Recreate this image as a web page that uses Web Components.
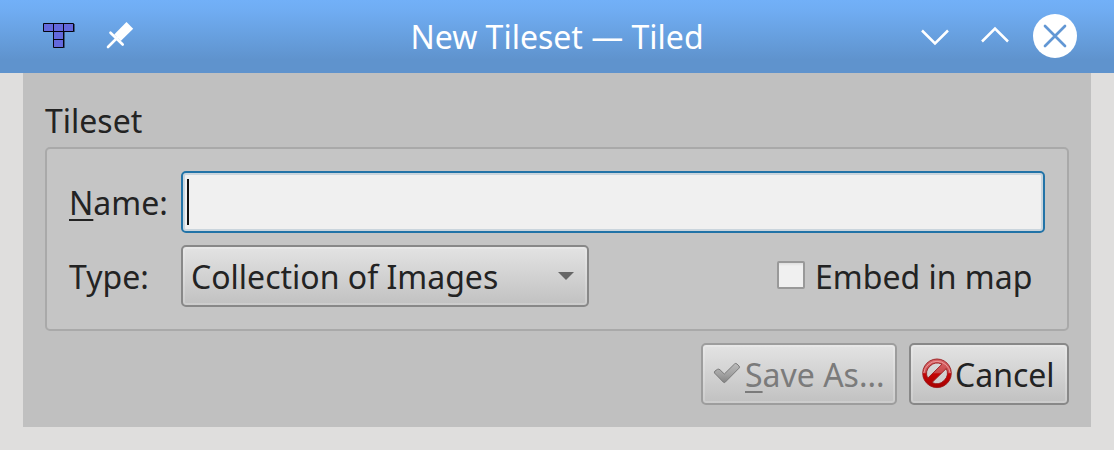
<!DOCTYPE html>
<html lang="en">
<head>
<meta charset="utf-8">
<title>New Tileset — Tiled</title>
<style>
html, body { margin: 0; height: 100%; overflow: hidden; }
body { background: #dfdedd; font: 32px/44px "Noto Sans", sans-serif; color: #232323; }
</style>
</head>
<body>
<tileset-dialog></tileset-dialog>
<script>
const define = (name, html) => {
  const template = document.createElement('template');
  template.innerHTML = html;
  customElements.define(name, class extends HTMLElement {
    constructor() {
      super();
      this.attachShadow({ mode: 'open' }).append(template.content.cloneNode(true));
    }
  });
};

define('title-bar', `
<style>
:host { display: grid; grid-template-columns: 400px 1fr 400px; align-items: center; height: 73px; box-sizing: border-box; padding-bottom: 1px; color: #fff; background: linear-gradient(#72b0f8 0, #70adf3 10px, #5f93cd 60px, #5f93cd 100%); }
.left { display: flex; align-items: center; padding-left: 42px; gap: 29px; }
.title { white-space: nowrap; text-align: center; padding-top: 2px; }
.right { display: flex; align-items: center; justify-content: flex-end; gap: 16px; padding-right: 37px; }
svg { display: block; }
</style>
<div class="left">
  <svg width="34" height="30" viewBox="0 0 34 30">
    <path d="M2 3h31v8H23v16H12V11H2z" fill="#2b425f" opacity=".75"/>
    <path d="M1.5 2.5h30v8h-10v16h-10v-16h-10z" fill="#6369dd" stroke="#050510"/>
    <path d="M11.5 2.5v8h10v-8M11.5 18.500h10" fill="none" stroke="#050510"/>
  </svg>
  <svg width="30" height="30" viewBox="0 0 30 30" fill="#fff">
    <path d="M21.500 1L28.200 7.800L15.700 20L9.200 13.500z"/>
    <path d="M5.500 11.700L17.700 23.500M12 17L3 26" fill="none" stroke="#fff" stroke-width="2.600" stroke-linecap="round"/>
  </svg>
</div>
<div class="title"><slot></slot></div>
<div class="right">
  <svg width="44" height="44" viewBox="0 0 44 44" fill="none" stroke="#fff" stroke-width="2.500"><path d="M9 16.500L22 29.500L35 16.500"/></svg>
  <svg width="44" height="44" viewBox="0 0 44 44" fill="none" stroke="#fff" stroke-width="2.500"><path d="M9 27.500L22 14.500L35 27.500"/></svg>
  <svg width="44" height="44" viewBox="0 0 44 44"><circle cx="22" cy="22" r="22" fill="#fff"/><path d="M12 12L32 32M32 12L12 32" stroke="#6297d4" stroke-width="2.700" stroke-linecap="round"/></svg>
</div>`);

define('group-box', `
<style>
:host { display: block; }
.caption { height: 48px; line-height: 44px; box-sizing: border-box; }
.frame { box-sizing: border-box; height: 184px; border: 2px solid #a9a9a9; border-radius: 5px; background: #c5c5c5; padding: 22px; display: grid; gap: 12px; grid-template-rows: 62px 62px; }
</style>
<div class="caption"><slot name="caption"></slot></div>
<div class="frame"><slot></slot></div>`);

define('form-row', `
<style>
:host { display: grid; grid-template-columns: 112px 1fr; height: 62px; align-items: center; }
.label { white-space: nowrap; padding-top: 2px; }
.content { display: flex; align-items: center; }
</style>
<div class="label"><slot name="label"></slot></div>
<div class="content"><slot></slot></div>`);

define('mnemonic-key', `
<style>
:host { display: inline; text-decoration: underline; text-decoration-thickness: 2px; text-underline-offset: 4px; text-decoration-skip-ink: none; }
</style><slot></slot>`);

define('text-field', `
<style>
:host { display: flex; align-items: center; flex: 1; box-sizing: border-box; height: 62px; border: 2px solid #2273a7; border-radius: 5px; background: #f0f0f0; box-shadow: inset 0 0 0 2px #cad5dd; padding-left: 4px; }
.caret { width: 2px; height: 46px; background: #111; }
</style><div class="caret"></div>`);

define('combo-box', `
<style>
:host { display: flex; align-items: center; justify-content: space-between; box-sizing: border-box; width: 408px; height: 62px; border: 2px solid #888; border-radius: 5px; padding: 0 13px 0 8px; background: linear-gradient(#e3e3e3, #c1c1c1); box-shadow: inset 0 0 0 2px #ffffff30; white-space: nowrap; }
span { padding-top: 2px; }
svg { display: block; }
</style><span><slot></slot></span>
<svg width="16" height="8" viewBox="0 0 16 8"><path d="M0 0h16L8 8z" fill="#666"/></svg>`);

define('check-box', `
<style>
:host { display: flex; align-items: center; gap: 10px; margin-left: 188px; white-space: nowrap; }
.box { box-sizing: border-box; width: 28px; height: 28px; border: 2px solid #999; border-radius: 2px; background: linear-gradient(#dedede 0, #f0f0f0 3px); margin-bottom: 2px; }
span { padding-top: 2px; }
</style><div class="box"></div><span><slot></slot></span>`);

define('push-button', `
<style>
:host { display: flex; align-items: center; box-sizing: border-box; width: 160px; height: 62px; border: 2px solid #888; border-radius: 5px; padding: 0 0 1px 10px; background: linear-gradient(#e3e3e3, #c1c1c1); box-shadow: inset 0 0 0 2px #ffffff30; white-space: nowrap; }
:host([disabled]) { width: 196px; border-color: #9d9d9d; color: #7b7b7b; }
span { padding-top: 2px; }
</style><slot name="icon"></slot><span><slot></slot></span>`);

define('accept-icon', `
<style>:host { display: block; width: 32px; height: 32px; } svg { display: block; }</style>
<svg width="32" height="32" viewBox="0 0 32 32">
  <defs><linearGradient id="g" x2="0" y2="1"><stop stop-color="#bbb"/><stop offset=".55" stop-color="#a2a2a2"/><stop offset="1" stop-color="#858585"/></linearGradient></defs>
  <path d="M1.500 15Q1 14 2 13L4.500 11.300Q6 10.700 7 11.800L11.300 16L21.500 6Q22.800 4.800 24 6L26 8Q27 9 26 10.200L12.200 24.200Q11.300 25 10.400 24.200z" fill="url(#g)" stroke="#7b7b7b" stroke-linejoin="round"/>
</svg>`);

define('forbid-icon', `
<style>:host { display: block; width: 34px; height: 32px; } svg { display: block; }</style>
<svg width="34" height="32" viewBox="0 0 34 32">
  <defs><linearGradient id="r" x2="0" y2="1"><stop stop-color="#d8666a"/><stop offset=".47" stop-color="#c94a4c"/><stop offset=".52" stop-color="#c60606"/><stop offset="1" stop-color="#a80000"/></linearGradient></defs>
  <path fill-rule="evenodd" d="M16 1a14.300 14.300 0 1 0 .01 0zM21 6.200L6.700 20.200A10.600 10.600 0 0 1 21 6.200zM25.300 10.500L11 24.500A10.600 10.600 0 0 0 25.300 10.500z" fill="url(#r)" stroke="#98181b" stroke-width=".9"/>
  <path d="M2.800 15A13.300 13.300 0 0 1 29.200 15" fill="none" stroke="#eda0a2" stroke-width=".9"/>
</svg>`);

define('tileset-dialog', `
<style>
:host { display: flex; flex-direction: column; height: 450px; }
main { box-sizing: border-box; height: 354px; margin: 0 23px; padding: 26px 22px 22px; background: #c0c0c0; display: flex; flex-direction: column; gap: 12px; }
footer { display: flex; justify-content: flex-end; gap: 12px; }
</style>
<title-bar>New Tileset — Tiled</title-bar>
<main>
  <group-box>
    <span slot="caption">Tileset</span>
    <form-row><span slot="label"><mnemonic-key>N</mnemonic-key>ame:</span><text-field></text-field></form-row>
    <form-row><span slot="label">Type:</span><combo-box>Collection of Images</combo-box><check-box>Embed in map</check-box></form-row>
  </group-box>
  <footer>
    <push-button disabled><accept-icon slot="icon"></accept-icon><mnemonic-key>S</mnemonic-key>ave As...</push-button>
    <push-button><forbid-icon slot="icon"></forbid-icon>Cancel</push-button>
  </footer>
</main>`);
</script>
</body>
</html>
